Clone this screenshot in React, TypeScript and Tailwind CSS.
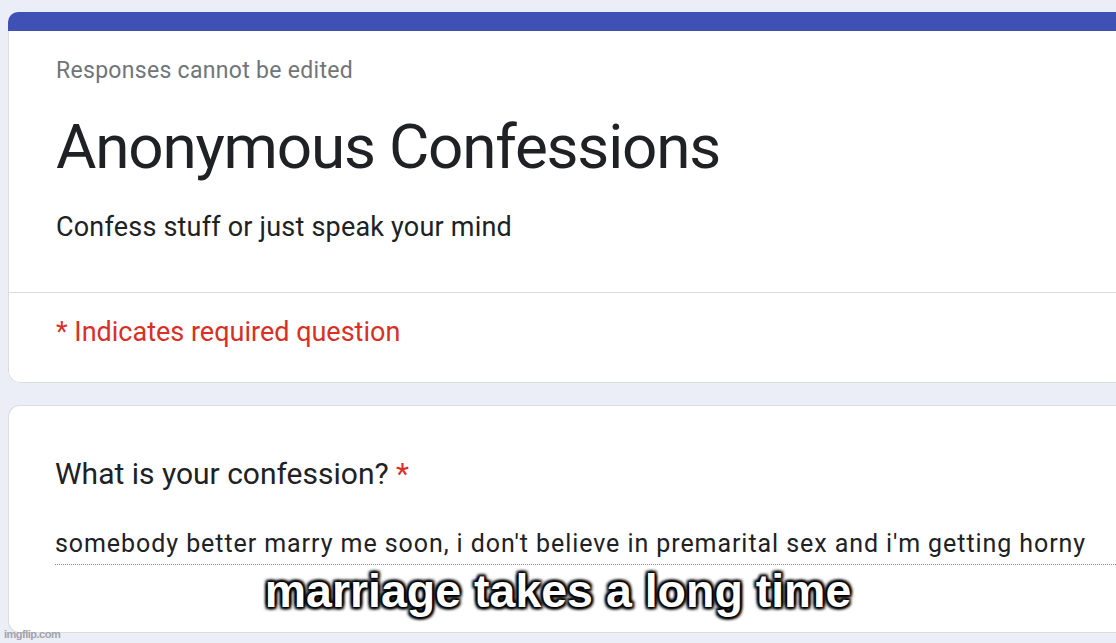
import React from "react";

export default function App() {
  return (
    <div
      className="relative h-[643px] w-full overflow-hidden bg-[#ebedf7]"
      style={{ fontFamily: "Roboto, 'Noto Sans', sans-serif" }}
    >
      <div className="pt-[12px] pl-[8px]">
        {/* Header card */}
        <div className="mr-[-40px] overflow-hidden rounded-tl-[10px] rounded-bl-[12px] bg-white">
          <div className="h-[19px] bg-[#3f51b5]" />
          <div className="rounded-bl-[12px] border-b border-l border-[#dadce0]">
            <div className="border-b border-[#dadce0] pl-[47px] pt-[26px] pb-[49px]">
              <div className="text-[23px] leading-[28px] tracking-[0.3px] text-[#70757a]">
                Responses cannot be edited
              </div>
              <div className="mt-[25px] text-[62px] leading-[74px] tracking-[-1.2px] text-[#202124]">
                Anonymous Confessions
              </div>
              <div className="mt-[27px] text-[27px] leading-[32px] tracking-[0.2px] text-[#202124]">
                Confess stuff or just speak your mind
              </div>
            </div>
            <div className="pl-[47px] pt-[23px] pb-[34px] text-[27px] leading-[32px] text-[#d93025]">
              * Indicates required question
            </div>
          </div>
        </div>

        {/* Question card */}
        <div className="mt-[22px] mr-[-40px] rounded-l-[12px] border border-r-0 border-[#dadce0] bg-white pl-[46px] pt-[50px] pb-[67px]">
          <div className="text-[30px] leading-[36px] text-[#202124]">
            What is your confession? <span className="text-[#d93025]">*</span>
          </div>
          <div className="mt-[38px] border-b border-dotted border-[#8a8f94] pb-[6px] text-[25px] leading-[28px] tracking-[0.93px] text-[#202124]">
            somebody better marry me soon, i don't believe in premarital sex and i'm getting horny
          </div>
        </div>
      </div>

      {/* Meme caption */}
      <div
        className="absolute left-0 right-0 top-[568px] text-center text-[46.5px] font-bold leading-[46px] text-white"
        style={{
          fontFamily: "'Liberation Sans', Arial, sans-serif",
          textShadow:
            "0 0 2px #000, 0 0 3px #000, 0 0 4px #000, 2px 2px 3px #000, -2px -2px 3px #000, 2px -2px 3px #000, -2px 2px 3px #000",
        }}
      >
        marriage takes a long time
      </div>

      {/* Watermark */}
      <div
        className="absolute left-[4px] top-[627px] text-[11px] font-bold leading-[14px] tracking-[-0.5px] text-[#a3a3a8]"
        style={{ fontFamily: "'Liberation Sans', Arial, sans-serif" }}
      >
        imgflip.com
      </div>
    </div>
  );
}
